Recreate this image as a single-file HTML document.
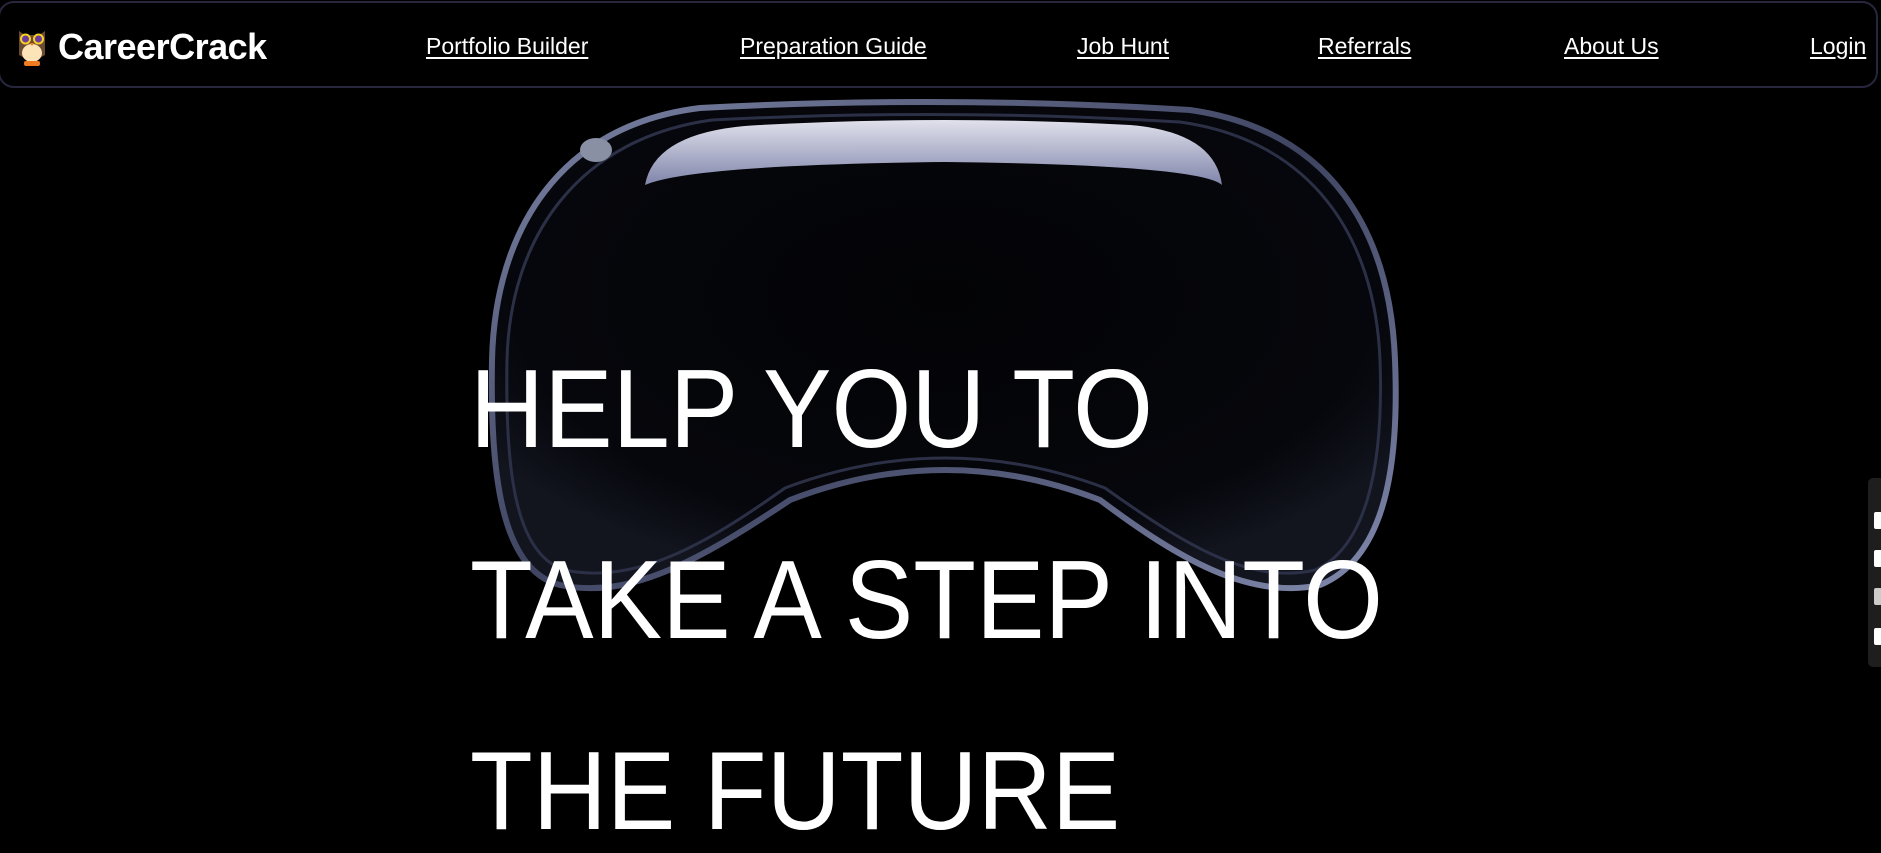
<!DOCTYPE html>
<html><head><meta charset="utf-8"><style>
html,body{margin:0;padding:0;background:#000;width:1881px;height:823px;overflow:hidden;font-family:"Liberation Sans",sans-serif;color:#fff}
.nav{position:absolute;left:-2px;top:1px;width:1880px;height:87px;border:2px solid #27263c;border-radius:16px;box-sizing:border-box}
.logo{position:absolute;left:58px;top:23px;font-weight:bold;font-size:36px;letter-spacing:-0.5px}
.nav a{position:absolute;top:30px;font-size:23px;color:#fff;text-decoration:underline;text-underline-offset:3px}
.h{position:absolute;left:470px;font-size:111px;transform:scaleX(0.925);transform-origin:left top;white-space:nowrap;line-height:1}
.w{position:absolute;left:1868px;top:478px;width:20px;height:189px;background:#1e1e1e;border-radius:5px}
.w i{position:absolute;left:6px;width:8px;height:17px;background:#fff;border-radius:2px}
</style></head><body>
<svg width="1881" height="823" style="position:absolute;left:0;top:0">
<defs>
<linearGradient id="st" x1="0" y1="0" x2="1" y2="1"><stop offset="0" stop-color="#7c84a6"/><stop offset=".5" stop-color="#3e4460"/><stop offset="1" stop-color="#8088ac"/></linearGradient>
<linearGradient id="band" x1="0" y1="0" x2="0" y2="1"><stop offset="0" stop-color="#f4f4ff"/><stop offset="1" stop-color="#8a90b8"/></linearGradient>
<radialGradient id="fill" cx=".5" cy=".4" r=".6"><stop offset="0" stop-color="#030306"/><stop offset=".8" stop-color="#06070c"/><stop offset="1" stop-color="#12141e"/></radialGradient>
</defs>
<path d="M700 108 Q945 95 1190 110 C1330 130 1390 230 1395 360 C1400 480 1380 560 1320 585 C1250 600 1180 560 1100 500 Q945 440 790 500 C700 560 630 600 560 585 C500 570 490 470 492 360 C495 230 560 125 700 108 Z" fill="url(#fill)" stroke="url(#st)" stroke-width="6"/>
<path d="M712 120 Q945 108 1180 122 C1310 140 1375 235 1380 360 C1384 470 1365 548 1315 570 C1250 585 1185 545 1105 488 Q945 428 785 488 C705 545 635 585 565 570 C515 555 505 470 507 360 C510 235 580 138 712 120 Z" fill="none" stroke="#2c3046" stroke-width="3"/>
<path d="M645 185 Q655 130 760 125 Q945 115 1130 125 Q1215 132 1222 185 Q1200 165 945 162 Q690 165 645 185 Z" fill="url(#band)" opacity=".92"/>
<ellipse cx="596" cy="150" rx="16" ry="12" fill="#8a90a4"/>
</svg>
<div class="nav">
<svg style="position:absolute;left:17px;top:24px" width="30" height="40" viewBox="0 0 30 40"><path d="M2 4 L8 8 L22 8 L28 4 L28 28 Q15 36 2 28 Z" fill="#6b4a32"/><ellipse cx="15" cy="26" rx="10" ry="9" fill="#fde3b8"/><circle cx="8.5" cy="12" r="5.5" fill="#f5d020"/><circle cx="21.5" cy="12" r="5.5" fill="#f5d020"/><circle cx="8.5" cy="12" r="3.5" fill="#6a3aa0"/><circle cx="21.5" cy="12" r="3.5" fill="#6a3aa0"/><path d="M13 16 L17 16 L15 19Z" fill="#f07a20"/><rect x="7" y="34" width="16" height="5" rx="2" fill="#f07a20"/></svg>
<div class="logo">CareerCrack</div>
<a style="left:426px">Portfolio Builder</a>
<a style="left:740px">Preparation Guide</a>
<a style="left:1077px">Job Hunt</a>
<a style="left:1318px">Referrals</a>
<a style="left:1564px">About Us</a>
<a style="left:1810px">Login</a>
</div>
<div class="h" style="top:354px">HELP YOU TO</div>
<div class="h" style="top:545px">TAKE A STEP INTO</div>
<div class="h" style="top:736px">THE FUTURE</div>
<div class="w"><i style="top:34px"></i><i style="top:72px"></i><i style="top:110px;background:#ccc"></i><i style="top:150px"></i></div>
</body></html>
